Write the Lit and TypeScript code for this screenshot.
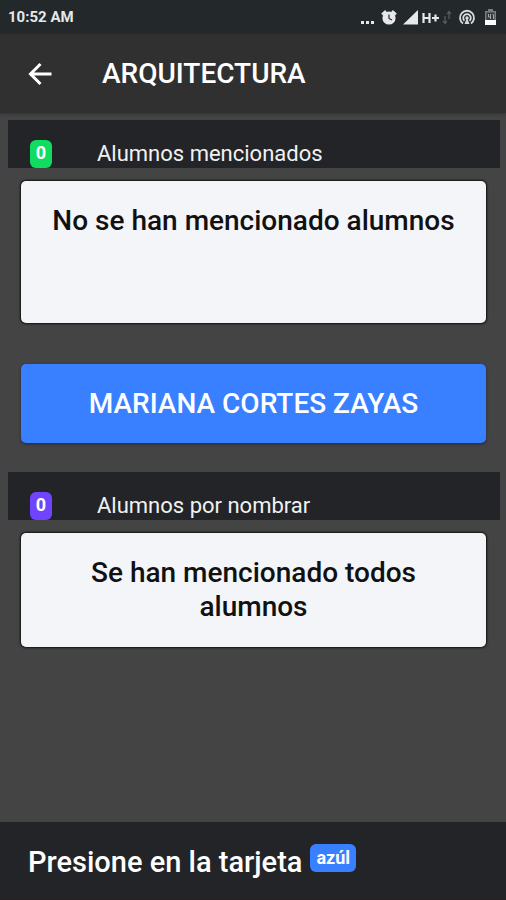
import { LitElement, html, css, svg } from "lit";
import { customElement, property } from "lit/decorators.js";

@customElement("status-bar")
class StatusBar extends LitElement {
  static styles = css`
    :host {
      display: flex;
      align-items: center;
      justify-content: space-between;
      height: 34px;
      padding: 0 8px;
      background: #23282b;
      color: #e6e8e9;
      font-size: 15px;
      font-weight: 700;
    }
    .icons {
      display: flex;
      align-items: center;
    }
    svg {
      display: block;
    }
  `;

  render() {
    return html`
      <time>10:52 AM</time>
      <div class="icons" aria-hidden="true">
        <svg width="138" height="20" viewBox="0 0 138 20">
          ${svg`
            <g fill="#e6e8e9">
              <rect x="1" y="14" width="3" height="3"/>
              <rect x="6" y="14" width="3" height="3"/>
              <rect x="11" y="14" width="3" height="3"/>
              <circle cx="29" cy="11" r="6.6"/>
              <path d="M22 7.5 26 4M36 7.5 32 4" stroke="#e6e8e9" stroke-width="2.4"/>
              <path d="M43 17.500 58 3v14.500z"/>
            </g>
            <path d="M29 7.500V11.500l3 1.500" fill="none" stroke="#23282b" stroke-width="1.200"/>
            <path d="M63.500 6v10M69.500 6v10M63 11h6.500M72 11h7M75.500 7.500v7" fill="none" stroke="#e6e8e9" stroke-width="2.200"/>
            <path d="M85 9v7M83 14l2 2.500 2-2.500M89 12V4.500M87 7l2-2.500 2 2.500" fill="none" stroke="#596165" stroke-width="1.200"/>
            <g fill="none" stroke="#d9dcdd" stroke-width="1.800">
              <path d="M103 16.500a7 7 0 1 1 8 0"/>
              <path d="M104.500 13.800a3.800 3.800 0 1 1 5 0"/>
            </g>
            <circle cx="107" cy="11" r="1.700" fill="#d9dcdd"/>
            <path d="M104.500 17 107 11l2.500 6z" fill="#d9dcdd"/>
            <path d="M125 4h3V2h5v2h3v14h-11z" fill="#777d80"/>
            <path d="M126.500 5.500h8V13h-8z" fill="#34393c"/>
            <path d="M125 13h11v5h-11z" fill="#fff"/>
            <path d="M128.500 7v3h2.500M130.500 7v5M132.500 7.500h1V12" fill="none" stroke="#a5a9ab"/>
          `}
        </svg>
      </div>
    `;
  }
}

@customElement("student-group")
class StudentGroup extends LitElement {
  @property() label = "";
  @property() count = "0";
  @property() message = "";
  @property() tone = "success";
  @property({ type: Boolean }) tall = false;

  static styles = css`
    :host {
      display: block;
    }
    .heading {
      display: flex;
      align-items: flex-end;
      height: 48px;
      box-sizing: border-box;
      margin: 0 6px 0 8px;
      padding-left: 22px;
      background: #222428;
      color: #f1f1f2;
    }
    .badge {
      width: 22px;
      height: 28px;
      border-radius: 6px;
      color: #fff;
      font-size: 18px;
      font-weight: 700;
      line-height: 26px;
      text-align: center;
    }
    .success {
      background: #10dc60;
    }
    .tertiary {
      background: #7044ff;
    }
    h2 {
      margin: 0 0 0 45px;
      font-size: 22px;
      font-weight: 400;
      line-height: 28px;
    }
    .card {
      box-sizing: border-box;
      min-height: 114px;
      margin: 13px 20px 0 21px;
      padding: 23px 28px;
      border-radius: 5px;
      background: #f4f5f8;
      box-shadow: 0 0 2px 1px #111;
      color: #111;
      font-size: 28px;
      font-weight: 500;
      line-height: 34px;
      text-align: center;
    }
    .tall {
      min-height: 142px;
    }
    p {
      margin: 0;
    }
  `;

  render() {
    return html`
      <section>
        <div class="heading">
          <span class="badge ${this.tone}">${this.count}</span>
          <h2>${this.label}</h2>
        </div>
        <div class="card ${this.tall ? "tall" : ""}"><p>${this.message}</p></div>
      </section>
    `;
  }
}

@customElement("app-root")
class AppRoot extends LitElement {
  static styles = css`
    :host {
      display: flex;
      flex-direction: column;
      min-height: 100vh;
      background: #444;
      font-family: Roboto, "Liberation Sans", sans-serif;
    }
    header {
      display: flex;
      align-items: center;
      height: 79px;
      padding-left: 24px;
      background: #303030;
      box-shadow: 0 1px 3px #333;
      color: #fff;
    }
    .back {
      display: flex;
      padding: 0;
      border: 0;
      background: none;
      color: inherit;
    }
    h1 {
      margin: 0 0 0 46px;
      font-size: 28px;
      font-weight: 500;
      line-height: 34px;
    }
    main {
      flex: 1;
      padding-top: 7px;
    }
    .student {
      display: block;
      width: calc(100% - 41px);
      min-height: 79px;
      margin: 41px 20px 29px 21px;
      padding: 0 16px;
      border: 0;
      border-radius: 5px;
      background: #3880ff;
      box-shadow: 0 1px 3px #1c2a44;
      color: #fff;
      font: 500 28px/34px Roboto, "Liberation Sans", sans-serif;
    }
    footer {
      display: flex;
      align-items: flex-start;
      gap: 8px;
      box-sizing: border-box;
      min-height: 78px;
      padding: 22px 28px 19px;
      border-bottom: 1px solid #2a1f24;
      background: #222428;
      color: #fff;
      font-size: 29px;
      font-weight: 500;
      line-height: 36px;
    }
    .badge {
      padding: 0 6px;
      border-radius: 6px;
      background: #3880ff;
      font-size: 18px;
      font-weight: 700;
      line-height: 28px;
    }
  `;

  render() {
    return html`
      <status-bar></status-bar>
      <header>
        <button class="back" aria-label="Volver">
          <svg width="32" height="32" viewBox="0 0 32 32" fill="none" stroke="currentColor" stroke-width="3">
            <path d="M27.500 16H7M16.500 6l-10 10 10 10" />
          </svg>
        </button>
        <h1>ARQUITECTURA</h1>
      </header>
      <main>
        <student-group
          label="Alumnos mencionados"
          message="No se han mencionado alumnos"
          tone="success"
          tall
        ></student-group>
        <button class="student">MARIANA CORTES ZAYAS</button>
        <student-group
          label="Alumnos por nombrar"
          message="Se han mencionado todos alumnos"
          tone="tertiary"
        ></student-group>
      </main>
      <footer>
        <span>Presione en la tarjeta</span>
        <span class="badge">azúl</span>
      </footer>
    `;
  }
}
